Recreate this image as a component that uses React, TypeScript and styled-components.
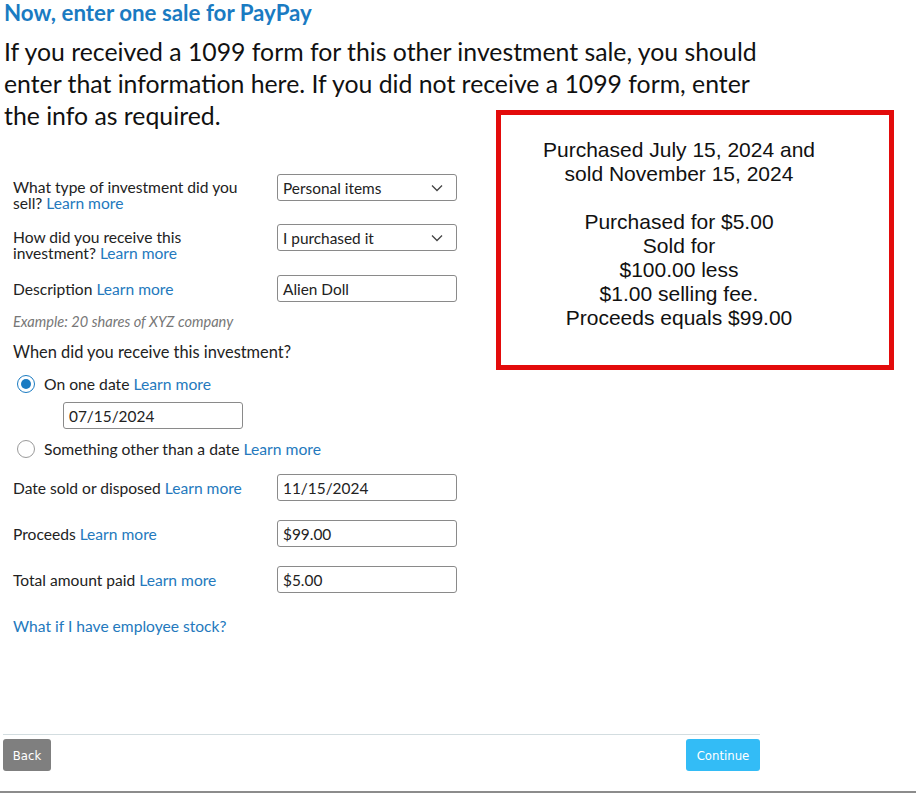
import React from "react";
import styled, { createGlobalStyle } from "styled-components";

const Global = createGlobalStyle`
  html, body { margin: 0; padding: 0; background: #fff; }
  body { font-family: Lato, "Open Sans", sans-serif; color: #111; }
  * { box-sizing: border-box; }
`;

const Page = styled.div`
  position: relative;
  width: 916px;
  height: 793px;
  overflow: hidden;
  border-bottom: 2px solid #8c8c8c;
`;

const Main = styled.div`
  width: 760px;
  padding: 0 0 0 3px;
  display: flex;
  flex-direction: column;
`;

const Title = styled.h1`
  margin: 0;
  padding-left: 1px;
  font-size: 22.3px;
  line-height: 26px;
  font-weight: 700;
  color: #1a7bc2;
`;

const Intro = styled.p`
  margin: 10px 0 0 1px;
  font-size: 24.8px;
  line-height: 32px;
  color: #111;
`;

const Form = styled.div`
  margin-top: 42px;
  padding-left: 10px;
  display: flex;
  flex-direction: column;
`;

const Row = styled.div<{ $mt?: number }>`
  display: grid;
  grid-template-columns: 264px 180px;
  align-items: start;
  margin-top: ${(p) => p.$mt ?? 0}px;
`;

const Label = styled.div<{ $pt?: number }>`
  max-width: 250px;
  font-size: 15.6px;
  line-height: 16px;
  color: #222;
  padding-top: ${(p) => p.$pt ?? 5.5}px;
`;

const Link = styled.span`
  color: #2479bd;
`;

const Field = styled.div`
  height: 27px;
  border: 1px solid #8a8a8a;
  border-radius: 3px;
  display: flex;
  align-items: center;
  justify-content: space-between;
  padding: 0 13px 0 5px;
  font-size: 15.4px;
  color: #222;
  background: #fff;
`;

const DateField = styled(Field)`
  width: 180px;
  margin: 8px 0 0 50px;
`;

const Hint = styled.div`
  margin-top: 11px;
  font-size: 14.6px;
  line-height: 18px;
  font-style: italic;
  color: #777;
`;

const Question = styled.div`
  margin-top: 11px;
  font-size: 16.4px;
  line-height: 20px;
  color: #222;
`;

const RadioRow = styled.div<{ $mt: number }>`
  display: flex;
  align-items: center;
  gap: 9px;
  height: 20px;
  margin: ${(p) => p.$mt}px 0 0 4px;
  font-size: 15.7px;
  color: #222;
`;

const Radio = styled.span<{ $on?: boolean }>`
  width: 18px;
  height: 18px;
  border-radius: 50%;
  border: 1px solid ${(p) => (p.$on ? "#1a7bc2" : "#9a9a9a")};
  display: inline-flex;
  align-items: center;
  justify-content: center;
  &::after {
    content: "";
    width: 10px;
    height: 10px;
    border-radius: 50%;
    background: ${(p) => (p.$on ? "#1a7bc2" : "transparent")};
  }
`;

const StockLink = styled.div`
  margin-top: 23px;
  font-size: 15.6px;
  line-height: 20px;
  color: #2479bd;
`;

const Footer = styled.div`
  margin-top: 98px;
  border-top: 1px solid #d3dde0;
  padding-top: 4px;
  display: flex;
  justify-content: space-between;
`;

const Button = styled.button<{ $primary?: boolean; $w: number }>`
  width: ${(p) => p.$w}px;
  height: 32px;
  border: none;
  border-radius: 3px;
  padding: 0;
  background: ${(p) => (p.$primary ? "#33bcf6" : "#7f7f7f")};
  color: #fff;
  font-family: "DejaVu Sans Condensed", "Liberation Sans Narrow", sans-serif;
  font-size: 13px;
`;

const Note = styled.div`
  position: absolute;
  left: 496px;
  top: 110px;
  width: 398px;
  height: 260px;
  border: 5px solid #e30b0b;
  padding-top: 23px;
  font-family: "Liberation Sans", Arial, sans-serif;
  font-size: 21px;
  line-height: 24px;
  color: #111;
  text-align: center;
`;

const NoteLines = styled.div`
  width: 356px;
`;

const Chevron = () => (
  <svg width="12" height="8" viewBox="0 0 12 8" fill="none">
    <path d="M1 1.5L6 6.5L11 1.5" stroke="#444" strokeWidth="1.3" />
  </svg>
);

export default function App() {
  return (
    <Page>
      <Global />
      <Main>
        <Title>Now, enter one sale for PayPay</Title>
        <Intro>
          If you received a 1099 form for this other investment sale, you should enter that
          information here. If you did not receive a 1099 form, enter the info as required.
        </Intro>
        <Form>
          <Row>
            <Label $pt={5}>
              What type of investment did you sell? <Link>Learn more</Link>
            </Label>
            <Field>
              Personal items <Chevron />
            </Field>
          </Row>
          <Row $mt={13}>
            <Label $pt={5}>
              How did you receive this investment? <Link>Learn more</Link>
            </Label>
            <Field>
              I purchased it <Chevron />
            </Field>
          </Row>
          <Row $mt={14}>
            <Label>
              Description <Link>Learn more</Link>
            </Label>
            <Field>Alien Doll</Field>
          </Row>
          <Hint>Example: 20 shares of XYZ company</Hint>
          <Question>When did you receive this investment?</Question>
          <RadioRow $mt={12}>
            <Radio $on />
            <span>
              On one date <Link>Learn more</Link>
            </span>
          </RadioRow>
          <DateField>07/15/2024</DateField>
          <RadioRow $mt={10}>
            <Radio />
            <span>
              Something other than a date <Link>Learn more</Link>
            </span>
          </RadioRow>
          <Row $mt={15}>
            <Label>
              Date sold or disposed <Link>Learn more</Link>
            </Label>
            <Field>11/15/2024</Field>
          </Row>
          <Row $mt={19}>
            <Label>
              Proceeds <Link>Learn more</Link>
            </Label>
            <Field>$99.00</Field>
          </Row>
          <Row $mt={19}>
            <Label>
              Total amount paid <Link>Learn more</Link>
            </Label>
            <Field>$5.00</Field>
          </Row>
          <StockLink>What if I have employee stock?</StockLink>
        </Form>
        <Footer>
          <Button $w={48}>Back</Button>
          <Button $primary $w={74}>
            Continue
          </Button>
        </Footer>
      </Main>
      <Note>
        <NoteLines>
          Purchased July 15, 2024 and
          <br />
          sold November 15, 2024
          <br />
          <br />
          Purchased for $5.00
          <br />
          Sold for
          <br />
          $100.00 less
          <br />
          $1.00 selling fee.
          <br />
          Proceeds equals $99.00
        </NoteLines>
      </Note>
    </Page>
  );
}
